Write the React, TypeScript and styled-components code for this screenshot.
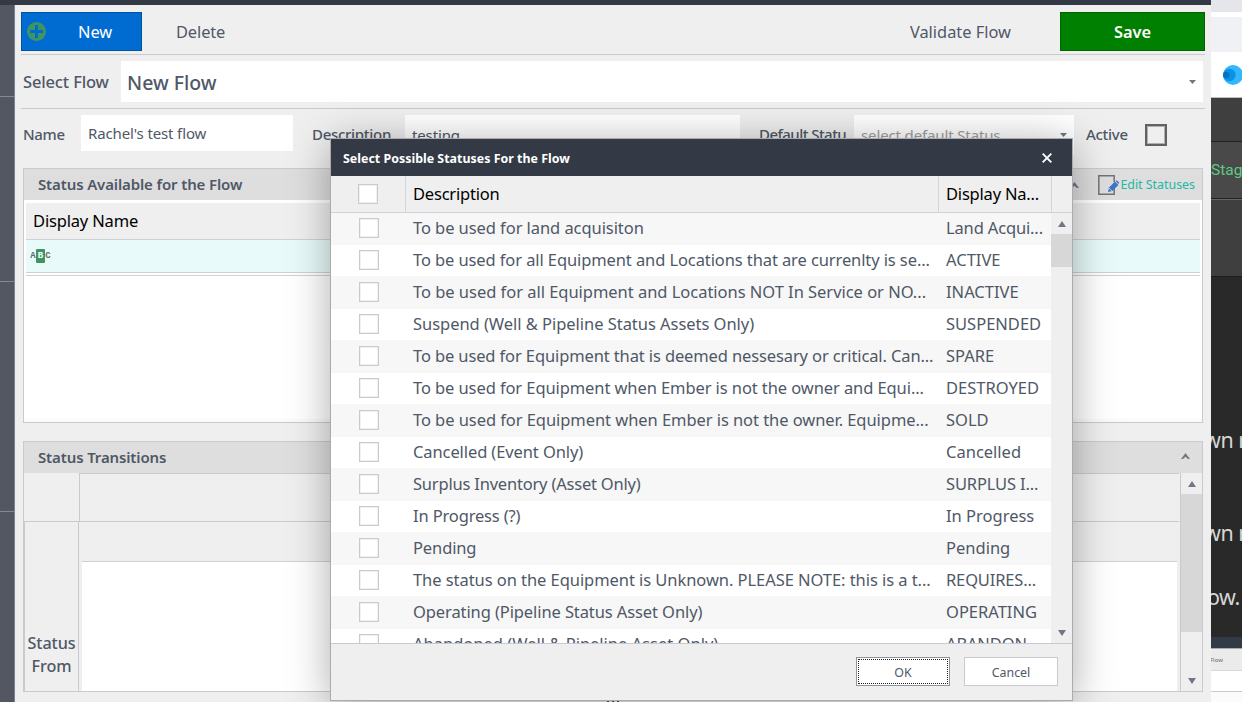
import { FC, ReactNode } from 'react';
import styled, { createGlobalStyle } from 'styled-components';

interface StatusRow {
  description: string;
  displayName: string;
  tracking: number;
}

const statuses: StatusRow[] = [
  { description: 'To be used for land acquisiton', displayName: 'Land Acqui...', tracking: -0.07 },
  { description: 'To be used for all Equipment and Locations that are currenlty is se...', displayName: 'ACTIVE', tracking: -0.1 },
  { description: 'To be used for all Equipment and Locations NOT In Service or NO...', displayName: 'INACTIVE', tracking: -0.03 },
  { description: 'Suspend (Well & Pipeline Status Assets Only)', displayName: 'SUSPENDED', tracking: -0.04 },
  { description: 'To be used for Equipment that is deemed nessesary or critical. Can...', displayName: 'SPARE', tracking: -0.12 },
  { description: 'To be used for Equipment when Ember is not the owner and Equi...', displayName: 'DESTROYED', tracking: -0.09 },
  { description: 'To be used for Equipment when Ember is not the owner. Equipme...', displayName: 'SOLD', tracking: -0.06 },
  { description: 'Cancelled (Event Only)', displayName: 'Cancelled', tracking: -0.1 },
  { description: 'Surplus Inventory (Asset Only)', displayName: 'SURPLUS I...', tracking: -0.2 },
  { description: 'In Progress (?)', displayName: 'In Progress', tracking: -0.15 },
  { description: 'Pending', displayName: 'Pending', tracking: -0.12 },
  { description: 'The status on the Equipment is Unknown. PLEASE NOTE: this is a t...', displayName: 'REQUIRES...', tracking: -0.06 },
  { description: 'Operating (Pipeline Status Asset Only)', displayName: 'OPERATING', tracking: -0.1 },
  { description: 'Abandoned (Well & Pipeline Asset Only)', displayName: 'ABANDON...', tracking: 0 },
];

const PlusIcon: FC = () => (
  <svg width="19" height="19" viewBox="0 0 19 19">
    <circle cx="9.5" cy="9.5" r="9.5" fill="#3f9560" />
    <path d="M8 3h3v5h5v3h-5v5H8v-5H3V8h5z" fill="#006cd2" />
  </svg>
);

const EditIcon: FC = () => (
  <svg width="22" height="20" viewBox="0 0 22 20">
    <path d="M16.2 12v7.2H.8V.8h15.4V7" fill="none" stroke="#737373" strokeWidth="1.5" />
    <path d="M10 17l1-4.4 6-6 3.4 3.4-6 6z" fill="#3c76c8" />
    <path d="M17.6 6l1-.8 2.6 2.4-.8 1.4z" fill="#3c76c8" />
    <path d="M11 13l3 3" stroke="#dedede" strokeWidth=".8" />
  </svg>
);

const CloseIcon: FC = () => (
  <svg width="10" height="10" viewBox="0 0 10 10">
    <path d="M.7.7l8.6 8.6M9.3.7L.7 9.3" stroke="#fff" strokeWidth="1.9" />
  </svg>
);

const Triangle: FC<{ down?: boolean }> = ({ down }) => (
  <svg width="8" height="6" viewBox="0 0 8 6">
    <path d={down ? 'M0 0h8L4 6z' : 'M0 6h8L4 0z'} fill="#707783" />
  </svg>
);

const Chevron: FC = () => (
  <svg width="9" height="6" viewBox="0 0 9 6">
    <path d="M0 6l4.5-6L9 6H7L4.5 3.8 2 6z" fill="#707783" />
  </svg>
);

const DropArrow: FC = () => (
  <svg width="7" height="4" viewBox="0 0 7 4">
    <path d="M0 0h7L3.5 4z" fill="#707783" />
  </svg>
);

const GlobeIcon: FC = () => (
  <svg width="20" height="20" viewBox="0 0 20 20">
    <circle cx="10" cy="10" r="10" fill="#35b7ff" />
    <circle cx="6.4" cy="10" r="6.2" fill="#0a93e6" />
    <circle cx="3.3" cy="10" r="3.3" fill="#0670c2" />
  </svg>
);

const Panel: FC<{ title: string; height: number; action?: ReactNode; children: ReactNode }> = ({
  title,
  height,
  action,
  children,
}) => (
  <PanelStyled $height={height}>
    <PanelHeader>
      <PanelTitle>{title}</PanelTitle>
      <PanelTools $wide={!!action}>
        <Chevron />
        {action}
      </PanelTools>
    </PanelHeader>
    {children}
  </PanelStyled>
);

const StatusDialog: FC = () => (
  <Dialog>
    <DialogTitle>
      <DialogTitleText>Select Possible Statuses For the Flow</DialogTitleText>
      <CloseIcon />
    </DialogTitle>
    <GridHeader>
      <HeadCell $center><CheckBox $shift={-1} /></HeadCell>
      <HeadCell>Description</HeadCell>
      <HeadCell>Display Na...</HeadCell>
      <HeadCell />
    </GridHeader>
    <GridBody>
      <Rows>
        {statuses.map(({ description, displayName, tracking }) => (
          <Row key={description}>
            <CheckBox />
            <Cell $tracking={tracking}>{description}</Cell>
            <Cell $tracking={displayName.endsWith('...') ? -0.15 : 0}>{displayName}</Cell>
          </Row>
        ))}
      </Rows>
      <DialogScroll>
        <ScrollButton><Triangle /></ScrollButton>
        <Thumb $height={33} />
        <ScrollButton $last><Triangle down /></ScrollButton>
      </DialogScroll>
    </GridBody>
    <DialogFooter>
      <DialogButton $focused>OK</DialogButton>
      <DialogButton>Cancel</DialogButton>
    </DialogFooter>
  </Dialog>
);

const App: FC = () => (
  <>
    <GlobalStyle />
    <Screen>
      <FlowWindow>
        <TopBar />
        <WindowBody>
          <SideStrip>
            <StripBlock $height={92} />
            <StripBlock $height={185} />
            <StripBlock $height={230} />
          </SideStrip>
          <Content>
            <Toolbar>
              <NewButton>
                <PlusIcon />
                <NewLabel>New</NewLabel>
              </NewButton>
              <FlatButton>Delete</FlatButton>
              <ValidateButton>Validate Flow</ValidateButton>
              <SaveButton>Save</SaveButton>
            </Toolbar>
            <FlowRow>
              <FlowLabel>Select Flow</FlowLabel>
              <FlowSelect>
                <FlowName>New Flow</FlowName>
                <DropArrow />
              </FlowSelect>
            </FlowRow>
            <Fields>
              <Label $width={58}>Name</Label>
              <Field $width={212}><FieldText>Rachel's test flow</FieldText></Field>
              <Label $width={93} $gap={19}>Description</Label>
              <Field $width={335} $low><FieldText>testing</FieldText></Field>
              <Label $width={95} $gap={19} $tracking={-0.55}>Default Statu</Label>
              <Field $width={220} $low>
                <FieldText $muted>select default Status</FieldText>
                <DropArrow />
              </Field>
              <Label $width={59} $gap={12}>Active</Label>
              <ActiveBox />
            </Fields>
            <Panel
              title="Status Available for the Flow"
              height={255}
              action={<EditLink><EditIcon />Edit Statuses</EditLink>}
            >
              <AvailableGrid>
                <AvailableHead>Display Name</AvailableHead>
                <FilterRow>
                  <FilterLetter>A</FilterLetter>
                  <FilterLetter $active>B</FilterLetter>
                  <FilterLetter>C</FilterLetter>
                </FilterRow>
                <FilterGap />
              </AvailableGrid>
            </Panel>
            <Panel title="Status Transitions" height={251}>
              <Transitions>
                <Matrix>
                  <MatrixTop>
                    <MatrixCorner />
                    <MatrixHead />
                  </MatrixTop>
                  <MatrixBottom>
                    <MatrixSide>
                      <span>Status</span>
                      <span>From</span>
                    </MatrixSide>
                    <MatrixCells />
                  </MatrixBottom>
                </Matrix>
                <PanelScroll>
                  <ScrollButton><Triangle /></ScrollButton>
                  <Thumb $height={138} />
                  <ScrollButton $last><Triangle down /></ScrollButton>
                </PanelScroll>
              </Transitions>
            </Panel>
            <Splitter><i /><i /><i /></Splitter>
          </Content>
        </WindowBody>
      </FlowWindow>
      <Behind>
        <Band $height={12} $color="#e4e6ea" />
        <Band $height={5} $color="#fff" />
        <Band $height={35} $color="#f0f1f4" />
        <Band $height={45} $color="#fff" $pad><GlobeIcon /></Band>
        <Band $height={44} $color="#3f3f3f" $line="#bdbdbd" />
        <Band $height={57} $color="#494949" $line="#222"><StageText>Stag</StageText></Band>
        <Band $height={2} $color="#666" $line="#222" />
        <Band $height={76} $color="#3f3f3f" />
        <Band $height={361} $color="#292929" $line="#1c1c1c">
          <Caption $top={149}>wn r</Caption>
          <Caption $top={63}>wn r</Caption>
          <Caption $top={34} $left={-4}>ow.</Caption>
        </Band>
        <Band $height={11} $color="#323a46" />
        <Band $height={22} $color="#ebebeb" $line="#aaa"><TinyText>Flow</TinyText></Band>
        <Band $height={21} $color="#fff" $line="#d8d8d8" />
        <Band $height={11} $color="#fbfbfb" $line="#c9c9c9" />
      </Behind>
      <StatusDialog />
    </Screen>
  </>
);

const GlobalStyle = createGlobalStyle`
  * {
    box-sizing: border-box;
  }

  body {
    margin: 0;
    overflow: hidden;
    font-family: 'Noto Sans', 'Open Sans', sans-serif;
    color: #4f5866;
  }

  svg {
    display: block;
    flex: none;
  }
`;

const Screen = styled.div`
  position: relative;
  display: flex;
  width: 1242px;
  height: 702px;
  overflow: hidden;
  background: #efefef;
  white-space: nowrap;
`;

const FlowWindow = styled.div`
  display: flex;
  flex-direction: column;
  width: 1211px;
  flex: none;
`;

const TopBar = styled.div`
  height: 5px;
  background: #333a46;
`;

const WindowBody = styled.div`
  display: flex;
  flex: 1;
`;

const SideStrip = styled.div`
  width: 15px;
  background: #525762;
  border-right: 1px solid #7b808a;
`;

const StripBlock = styled.div<{ $height: number }>`
  height: ${({ $height }) => $height}px;
  border-bottom: 1px solid #858993;
`;

const Content = styled.div`
  width: 1196px;
  padding: 0 6px;
`;

const Toolbar = styled.div`
  display: flex;
  height: 50px;
  padding-top: 7px;
  border-bottom: 1px solid #c9cad0;
  font-size: 16.4px;
  line-height: 40px;
`;

const NewButton = styled.div`
  display: flex;
  align-items: center;
  width: 121px;
  height: 39px;
  padding-left: 5px;
  background: #006cd2;
  border: 1px solid #0053a2;
  color: #fff;
`;

const NewLabel = styled.span`
  margin-left: 32px;
  line-height: 38px;
`;

const FlatButton = styled.div`
  margin-left: 34px;
  letter-spacing: -0.1px;
`;

const ValidateButton = styled.div`
  margin-left: auto;
  margin-right: 49px;
`;

const SaveButton = styled.div`
  width: 145px;
  height: 39px;
  background: #008000;
  border: 1px solid #006400;
  color: #fff;
  font-weight: 600;
  line-height: 38px;
  text-align: center;
`;

const FlowRow = styled.div`
  display: flex;
  align-items: center;
  height: 54px;
  padding: 0 2px;
  border-bottom: 1px solid #c9cad0;
`;

const FlowLabel = styled.div`
  width: 98px;
  font-size: 16.5px;
  font-weight: 500;
  letter-spacing: -0.15px;
`;

const FlowSelect = styled.div`
  display: flex;
  align-items: center;
  justify-content: space-between;
  flex: 1;
  height: 41px;
  padding: 0 7px 0 6px;
  background: #fff;
`;

const FlowName = styled.span`
  padding-top: 2px;
  font-size: 19.5px;
  font-weight: 500;
  line-height: 38px;
`;

const Fields = styled.div`
  display: flex;
  height: 59px;
  padding: 6px 2px 0;
`;

const Label = styled.div<{ $width: number; $gap?: number; $tracking?: number }>`
  width: ${({ $width }) => $width}px;
  flex: none;
  margin-left: ${({ $gap }) => $gap || 0}px;
  font-size: 15px;
  font-weight: 500;
  letter-spacing: ${({ $tracking }) => $tracking ?? -0.3}px;
  line-height: 39px;
`;

const Field = styled.div<{ $width: number; $low?: boolean }>`
  display: flex;
  align-items: center;
  justify-content: space-between;
  width: ${({ $width }) => $width}px;
  height: ${({ $low }) => ($low ? 40 : 36)}px;
  padding: 0 7px;
  background: #fff;
`;

const FieldText = styled.span<{ $muted?: boolean }>`
  font-size: 15px;
  letter-spacing: -0.13px;
  line-height: 20px;
  color: ${({ $muted }) => ($muted ? '#a0a0a0' : 'inherit')};
`;

const ActiveBox = styled.div`
  width: 22px;
  height: 22px;
  margin-top: 9px;
  border: 2px solid #626262;
  box-shadow: inset 0 0 0 1px #b0b0b0;
`;

const PanelStyled = styled.div<{ $height: number }>`
  height: ${({ $height }) => $height}px;
  margin: 0 2px 18px;
  border: 1px solid #c8cad0;
`;

const PanelHeader = styled.div`
  display: flex;
  justify-content: space-between;
  height: 31px;
  padding-left: 14px;
  background: #dedede;
`;

const PanelTitle = styled.span`
  font-size: 15px;
  font-weight: 600;
  letter-spacing: -0.13px;
  line-height: 30px;
`;

const PanelTools = styled.div<{ $wide: boolean }>`
  display: flex;
  align-items: center;
  gap: 19px;
  padding-right: ${({ $wide }) => ($wide ? 7 : 12)}px;
  padding-bottom: ${({ $wide }) => ($wide ? 0 : 3)}px;
`;

const EditLink = styled.div`
  display: flex;
  align-items: center;
  font-size: 12.4px;
  color: #22b8a4;
`;

const AvailableGrid = styled.div`
  height: 222px;
  padding: 3px 2px 0;
  background: #fff;
  border-bottom: 3px solid #fafafa;
`;

const AvailableHead = styled.div`
  height: 37px;
  padding-left: 7px;
  background: #efefef;
  border-bottom: 1px solid #cfd1d5;
  color: #000;
  font-size: 16.5px;
  letter-spacing: -0.17px;
  line-height: 36px;
`;

const FilterRow = styled.div`
  display: flex;
  align-items: center;
  height: 32px;
  padding-left: 4px;
  background: #e8fbfa;
`;

const FilterLetter = styled.span<{ $active?: boolean }>`
  width: ${({ $active }) => ($active ? 9 : 6)}px;
  height: ${({ $active }) => ($active ? 14 : 8)}px;
  border-radius: 1px;
  background: ${({ $active }) => ($active ? '#3f9560' : 'none')};
  color: ${({ $active }) => ($active ? '#fff' : '#666')};
  font: bold 9px 'Liberation Mono', monospace;
  line-height: ${({ $active }) => ($active ? 14 : 8)}px;
  text-align: center;
`;

const FilterGap = styled.div`
  height: 4px;
  border-top: 1px solid #cfd1d5;
  border-bottom: 1px solid #cfd1d5;
`;

const Transitions = styled.div`
  display: flex;
  height: 218px;
`;

const Matrix = styled.div`
  width: 1155px;
  margin-right: 1px;
`;

const MatrixTop = styled.div`
  display: flex;
  height: 48px;
`;

const MatrixCorner = styled.div`
  width: 55px;
`;

const MatrixHead = styled.div`
  flex: 1;
  border-top: 1px solid #c8cad0;
  border-left: 1px solid #c8cad0;
`;

const MatrixBottom = styled.div`
  display: flex;
  height: 170px;
  border-top: 1px solid #c8cad0;
  border-left: 1px solid #c8cad0;
`;

const MatrixSide = styled.div`
  display: flex;
  flex-direction: column;
  justify-content: flex-end;
  width: 54px;
  padding-bottom: 13px;
  border-right: 1px solid #c8cad0;
  font-size: 16.2px;
  font-weight: 500;
  letter-spacing: -0.1px;
  line-height: 23px;
  text-align: center;
`;

const MatrixCells = styled.div`
  flex: 1;
  margin: 39px 2px 0 3px;
  border-top: 1px solid #cfd1d5;
  background: #fff;
`;

const PanelScroll = styled.div`
  display: flex;
  flex-direction: column;
  width: 22px;
  border-left: 1px solid #c8cad0;
`;

const ScrollButton = styled.div<{ $last?: boolean }>`
  display: flex;
  align-items: center;
  justify-content: center;
  height: 21px;
  margin-top: ${({ $last }) => ($last ? 'auto' : 0)};
`;

const Thumb = styled.div<{ $height: number }>`
  height: ${({ $height }) => $height}px;
  background: #d7d7d7;
`;

const Splitter = styled.div`
  display: flex;
  gap: 3px;
  margin: -10px 0 0 586px;

  i {
    width: 2px;
    height: 2px;
    background: #50555f;
  }
`;

const Behind = styled.div`
  width: 31px;
  overflow: hidden;
`;

const Band = styled.div<{ $height: number; $color: string; $line?: string; $pad?: boolean }>`
  display: flow-root;
  height: ${({ $height }) => $height}px;
  padding: ${({ $pad }) => ($pad ? '13px 0 0 12px' : 0)};
  background: ${({ $color }) => $color};
  border-top: ${({ $line }) => ($line ? `1px solid ${$line}` : 'none')};
`;

const StageText = styled.div`
  font: 15.5px/56px Roboto, sans-serif;
  color: #5fc983;
`;

const Caption = styled.div<{ $top: number; $left?: number }>`
  height: 30px;
  margin: ${({ $top }) => $top}px 0 0 ${({ $left }) => $left ?? -7}px;
  font-size: 21.5px;
  letter-spacing: -0.5px;
  line-height: 28px;
  color: #d6d6d6;
`;

const TinyText = styled.div`
  margin-left: -1px;
  font-size: 6px;
  line-height: 22px;
  color: #666;
`;

const Dialog = styled.div`
  position: absolute;
  left: 331px;
  top: 139px;
  width: 741px;
  height: 561px;
  background: #efefef;
  box-shadow: 0 0 0 1px #a9abae, 0 5px 40px rgba(0, 0, 0, 0.34);
`;

const DialogTitle = styled.div`
  display: flex;
  align-items: center;
  justify-content: space-between;
  height: 37px;
  padding: 0 20px 0 12px;
  background: #333a46;
`;

const DialogTitleText = styled.span`
  padding-top: 2px;
  color: #fff;
  font-size: 12.4px;
  font-weight: 700;
  letter-spacing: 0.02px;
`;

const GridHeader = styled.div`
  display: grid;
  grid-template-columns: 74px 533px 113px 21px;
  height: 37px;
  border-bottom: 1px solid #cfd1d5;
`;

const HeadCell = styled.div<{ $center?: boolean }>`
  padding: ${({ $center }) => ($center ? '8px 0 0 28px' : '0 0 0 7px')};
  border-left: ${({ $center }) => ($center ? 'none' : '1px solid #d3d4d9')};
  color: #000;
  font-size: 16.5px;
  letter-spacing: -0.2px;
  line-height: 35px;
`;

const CheckBox = styled.div<{ $shift?: number }>`
  width: 20px;
  height: 20px;
  margin-left: ${({ $shift }) => $shift || 0}px;
  background: #fff;
  border: 1px solid #c8cad0;
  box-shadow: inset 0 0 0 1px #f0f1f3;
`;

const GridBody = styled.div`
  display: flex;
  height: 430px;
  overflow: hidden;
`;

const Rows = styled.div`
  width: 720px;
  background: #fff;
`;

const Row = styled.div`
  display: grid;
  grid-template-columns: 54px 533px 1fr;
  align-items: center;
  height: 32px;
  padding: 0 0 2px 28px;

  &:nth-child(odd) {
    background: #f7f7f7;
    box-shadow: 0 -1px #f7f7f7;
  }
`;

const Cell = styled.span<{ $tracking: number }>`
  font-size: 16.5px;
  letter-spacing: ${({ $tracking }) => $tracking}px;
  line-height: 30px;
`;

const DialogScroll = styled.div`
  display: flex;
  flex-direction: column;
  width: 21px;
`;

const DialogFooter = styled.div`
  display: flex;
  justify-content: flex-end;
  gap: 14px;
  height: 57px;
  padding: 13px 14px 0 0;
  border-top: 1px solid #c8cad0;
`;

const DialogButton = styled.div<{ $focused?: boolean }>`
  width: 94px;
  height: 29px;
  background: #fff;
  border: 1px solid ${({ $focused }) => ($focused ? '#8f949c' : '#c8cad0')};
  outline: ${({ $focused }) => ($focused ? '1px dotted #222' : 'none')};
  outline-offset: -3px;
  font-size: 12.4px;
  line-height: 30px;
  text-align: center;
`;

export default App;
